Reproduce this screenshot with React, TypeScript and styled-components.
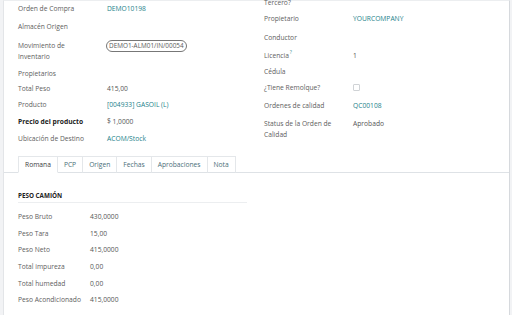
import React, {FunctionComponent} from 'react';
import styled, {createGlobalStyle} from 'styled-components';

const GlobalStyle = createGlobalStyle`
	html, body {
		margin: 0;
		padding: 0;
		background: #f2f3f5;
		overflow: hidden;
	}
	body {
		font-family: "Open Sans", "Noto Sans", sans-serif;
		font-size: 6.7px;
		color: #555;
	}
`;

type FieldRow = {
	label: string;
	value?: React.ReactNode;
	bold?: boolean;
	height: number;
};

const leftRows: FieldRow[] = [
	{label: 'Orden de Compra', value: <Link>DEMO10198</Link>, height: 18},
	{label: 'Almacén Origen', height: 19},
	{label: 'Movimiento de Inventario', value: <Badge>DEMO1-ALM01/IN/00054</Badge>, height: 28},
	{label: 'Propietarios', height: 15},
	{label: 'Total Peso', value: '415,00', height: 16},
	{label: 'Producto', value: <Link>[004933] GASOIL (L)</Link>, height: 17},
	{label: 'Precio del producto', value: '$ 1,0000', bold: true, height: 17},
	{label: 'Ubicación de Destino', value: <Link>ACOM/Stock</Link>, height: 17},
];

const rightRows: FieldRow[] = [
	{label: 'Tercero?', height: 16},
	{label: 'Propietario', value: <Link>YOURCOMPANY</Link>, height: 19},
	{label: 'Conductor', height: 18},
	{label: 'Licencia', value: '1', height: 16},
	{label: 'Cédula', height: 16},
	{label: '¿Tiene Remolque?', value: <Checkbox/>, height: 18},
	{label: 'Ordenes de calidad', value: <Link>QC00108</Link>, height: 18},
	{label: 'Status de la Orden de Calidad', value: 'Aprobado', height: 28},
];

const tabs = ['Romana', 'PCP', 'Origen', 'Fechas', 'Aprobaciones', 'Nota'];

const weights: [string, string][] = [
	['Peso Bruto', '430,0000'],
	['Peso Tara', '15,00'],
	['Peso Neto', '415,0000'],
	['Total impureza', '0,00'],
	['Total humedad', '0,00'],
	['Peso Acondicionado', '415,0000'],
];

const Group: FunctionComponent<{rows: FieldRow[]; shift?: number}> = ({rows, shift}) => (
	<FieldGroup shift={shift}>
		{rows.map(row => (
			<Row key={row.label} h={row.height}>
				<Label bold={row.bold}>
					{row.label}
					{row.label === 'Licencia' && <Help>?</Help>}
				</Label>
				<Value>{row.value}</Value>
			</Row>
		))}
	</FieldGroup>
);

const App: FunctionComponent = () => (
	<>
		<GlobalStyle/>
		<Sheet>
			<Groups>
				<Group rows={leftRows}/>
				<Group rows={rightRows} shift={-6}/>
			</Groups>
			<Tabs>
				{tabs.map((tab, i) => (
					<Tab key={tab} active={i === 0}>{tab}</Tab>
				))}
			</Tabs>
			<Pane>
				<Section>
					<SectionTitle>Peso camión</SectionTitle>
					{weights.map(([label, value]) => (
						<WeightRow key={label}>
							<WeightLabel>{label}</WeightLabel>
							<span>{value}</span>
						</WeightRow>
					))}
				</Section>
			</Pane>
		</Sheet>
	</>
);

const Sheet = styled.div`
	margin: 0 2px 0 3px;
	height: 315px;
	background: #fff;
	border-left: 1px solid #e3e5e8;
	border-right: 1px solid #d6d9dd;
	border-top: 1px solid #eceef0;
	box-sizing: border-box;
`;

const Groups = styled.div`
	display: grid;
	grid-template-columns: 246px 1fr;
	height: 148px;
	padding-left: 14px;
	align-items: start;
	margin-top: -1.5px;
`;

const FieldGroup = styled.div<{shift?: number}>`
	display: flex;
	flex-direction: column;
	margin-top: ${props => props.shift ?? 0}px;
`;

const Row = styled.div<{h: number}>`
	display: flex;
	flex: none;
	height: ${props => props.h}px;
	line-height: 11px;
	padding-top: 3px;
	box-sizing: border-box;
`;

const Label = styled.div<{bold?: boolean}>`
	width: 89px;
	flex: none;
	padding-right: 17px;
	box-sizing: border-box;
	color: ${props => props.bold ? '#222' : '#5e5e5e'};
	font-weight: ${props => props.bold ? 700 : 400};
`;

const Help = styled.sup`
	color: #3a8f96;
	font-size: 5px;
	line-height: 0;
	margin-left: 1px;
`;

const Value = styled.div`
	flex: 1;
	color: #555;
`;

function Link({children}: {children: React.ReactNode}) {
	return <LinkText>{children}</LinkText>;
}

const LinkText = styled.span`
	color: #1b7f8a;
`;

function Badge({children}: {children: React.ReactNode}) {
	return <BadgeBox>{children}</BadgeBox>;
}

const BadgeBox = styled.span`
	display: inline-block;
	margin-left: -1px;
	padding: 0 2px;
	font-size: 6.4px;
	line-height: 10px;
	border: 1px solid #777;
	border-radius: 6px;
	color: #5a5a5a;
`;

function Checkbox() {
	return <CheckBoxBox/>;
}

const CheckBoxBox = styled.span`
	display: inline-block;
	width: 7px;
	height: 7px;
	margin-top: 2px;
	border: 1px solid #d0d3d6;
	border-radius: 1px;
	box-sizing: border-box;
`;

const Tabs = styled.div`
	display: flex;
	margin-top: 8px;
	padding-left: 14px;
	border-bottom: 1px solid #dee2e6;
`;

const Tab = styled.div<{active?: boolean}>`
	padding: 0 6px;
	height: 17px;
	line-height: 16px;
	margin-bottom: -1px;
	border: 1px solid #e4e7ea;
	border-bottom-color: ${props => props.active ? '#fff' : '#dee2e6'};
	border-left-width: ${props => props.active ? 1 : 0}px;
	color: ${props => props.active ? '#3c3c3c' : '#4a6e78'};
	background: #fff;
	box-sizing: border-box;
`;

const Pane = styled.div`
	padding: 18px 0 0 14px;
`;

const Section = styled.div`
	width: 229px;
`;

const SectionTitle = styled.div`
	font-weight: 700;
	font-size: 6.3px;
	text-transform: uppercase;
	color: #222;
	padding-bottom: 2px;
	border-bottom: 1px solid #eceef0;
	margin-bottom: 6px;
`;

const WeightRow = styled.div`
	display: flex;
	height: 16.6px;
	align-items: center;
`;

const WeightLabel = styled.span`
	width: 72px;
	flex: none;
	color: #5e5e5e;
`;

export default App;
